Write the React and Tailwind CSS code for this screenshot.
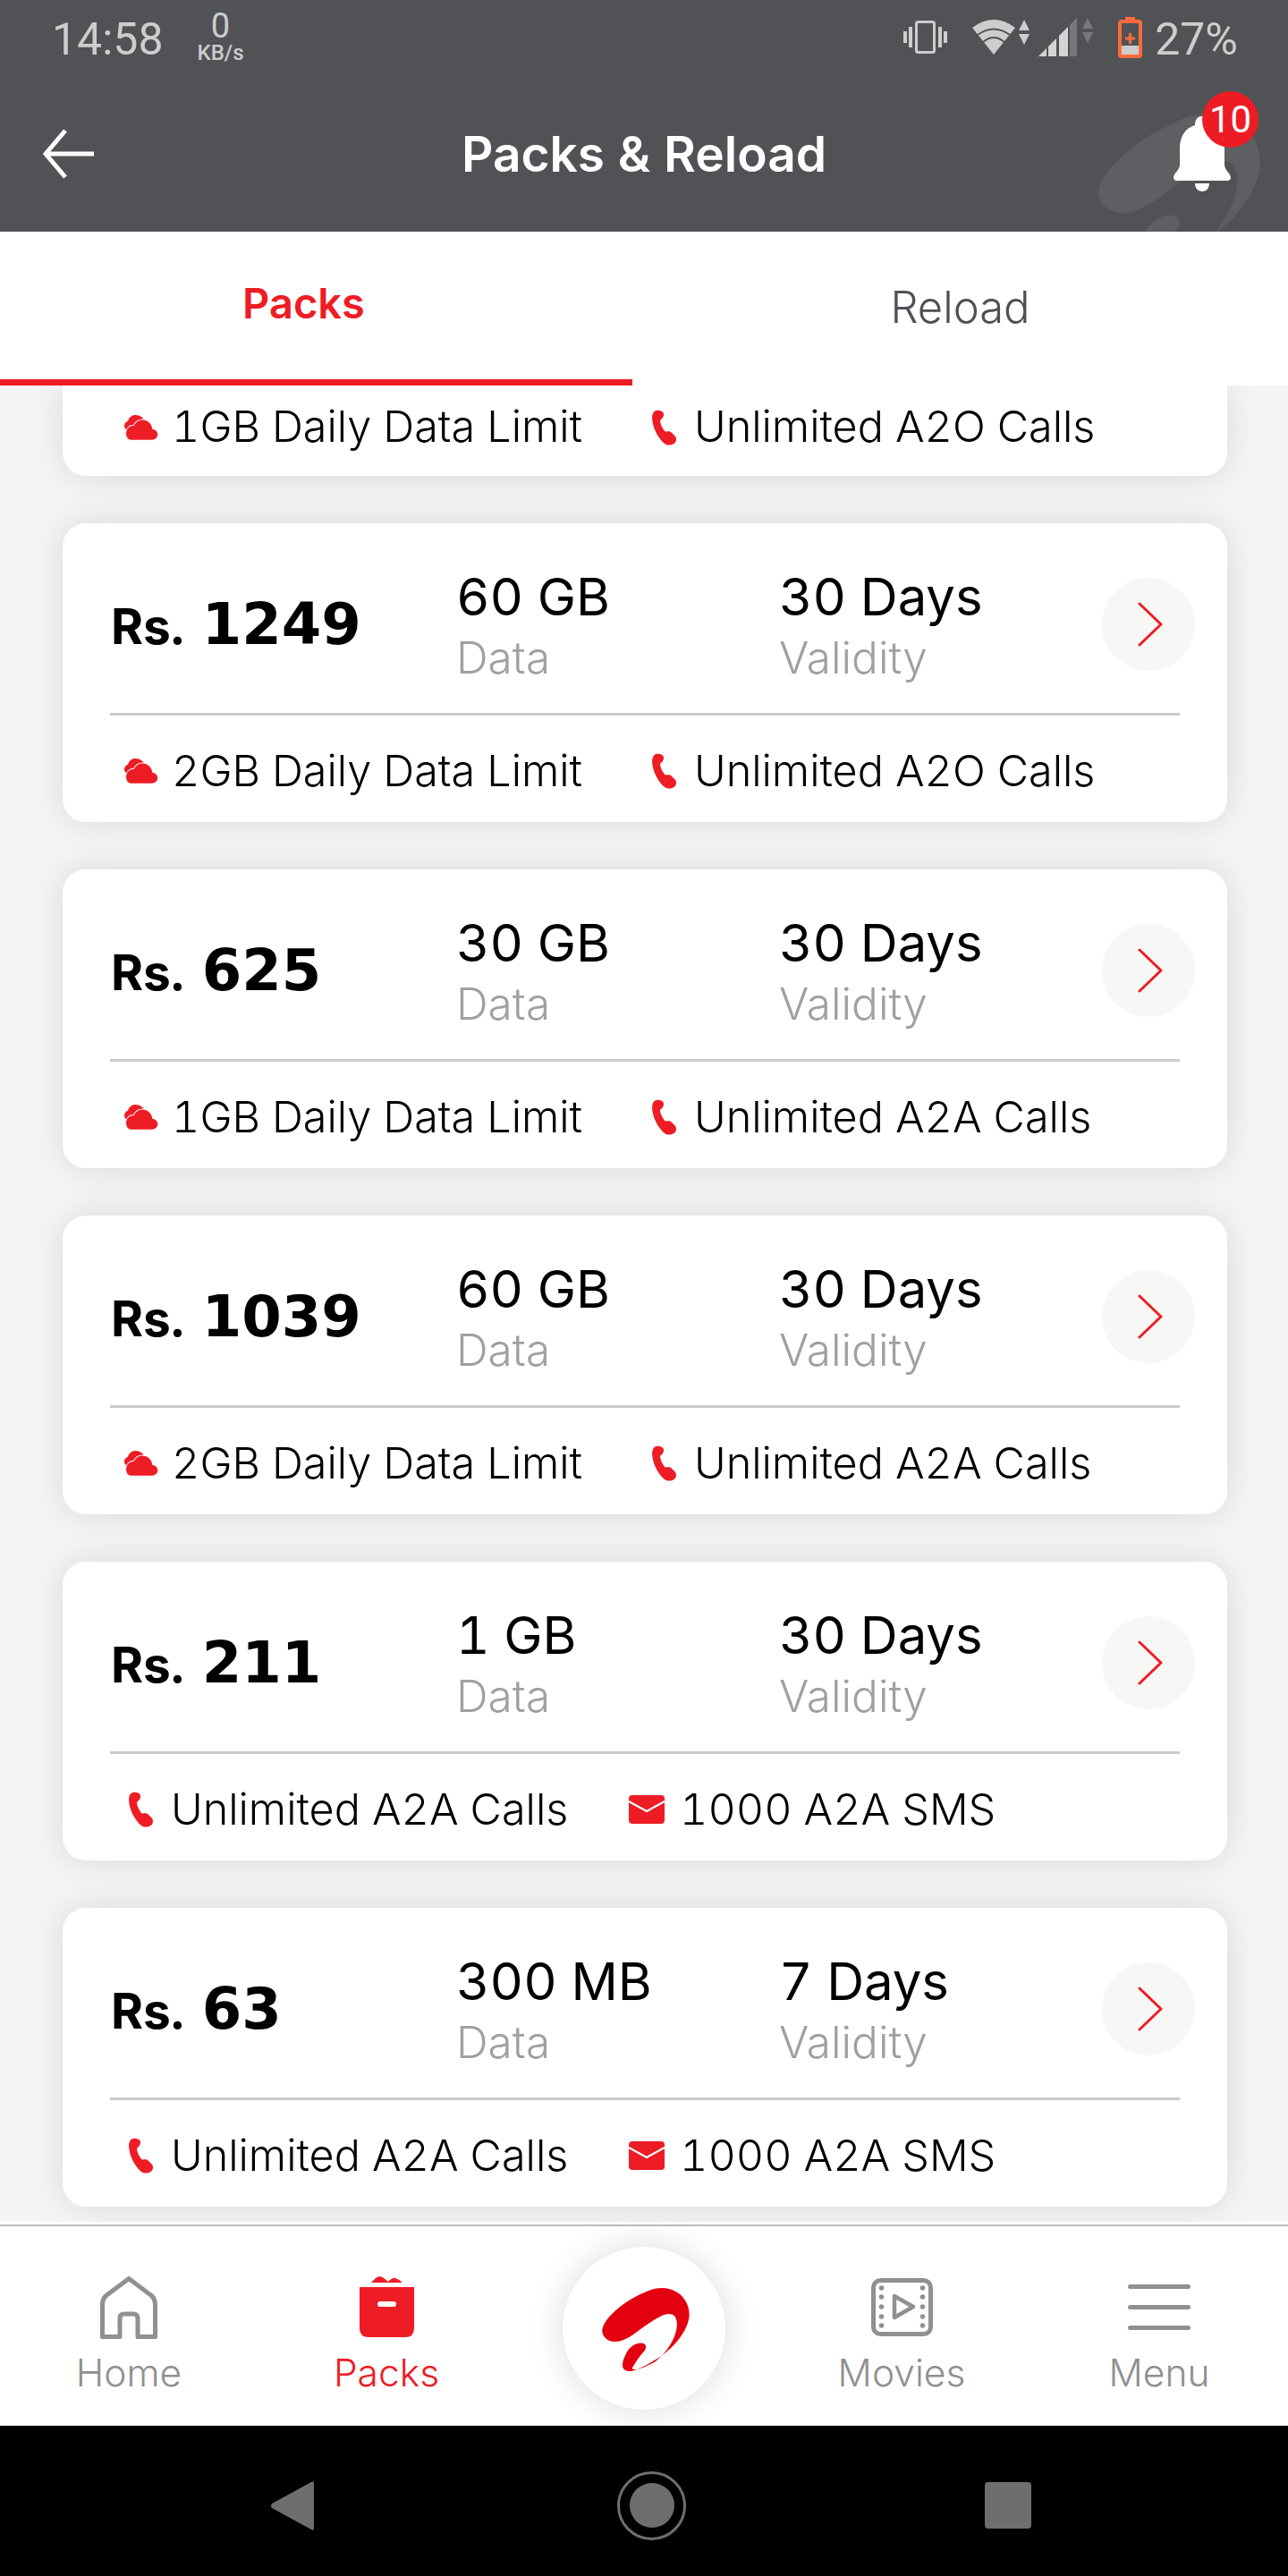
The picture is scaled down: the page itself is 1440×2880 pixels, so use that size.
import React from "react";

const RED = "#ee1c25";

const LOGO =
  "M70 215 C75 180 130 130 190 100 C220 85 245 75 270 75 C340 78 362 130 362 165 C360 220 300 290 240 320 C200 345 165 360 150 352 C130 345 138 320 150 295 C165 265 195 255 210 262 C222 270 215 285 205 293 C190 310 175 335 170 345 C180 355 215 340 250 320 C290 290 325 230 320 190 C318 160 295 155 265 170 C225 190 185 225 160 240 C130 258 95 262 78 240 C70 230 70 222 70 215 Z";

const packs = [
  { price: "1249", data: "60 GB", days: "30 Days", perks: [["cloud", "2GB Daily Data Limit"], ["phone", "Unlimited A2O Calls"]] },
  { price: "625", data: "30 GB", days: "30 Days", perks: [["cloud", "1GB Daily Data Limit"], ["phone", "Unlimited A2A Calls"]] },
  { price: "1039", data: "60 GB", days: "30 Days", perks: [["cloud", "2GB Daily Data Limit"], ["phone", "Unlimited A2A Calls"]] },
  { price: "211", data: "1 GB", days: "30 Days", perks: [["phone", "Unlimited A2A Calls"], ["mail", "1000 A2A SMS"]] },
  { price: "63", data: "300 MB", days: "7 Days", perks: [["phone", "Unlimited A2A Calls"], ["mail", "1000 A2A SMS"]] },
];

function CloudIcon() {
  return (
    <svg width="40" height="30" viewBox="0 0 120 92" className="shrink-0">
      <path d="M4 48 C-1 40 3 28 14 24 C18 10 30 0 44 4 C54 4 62 10 68 16 L30 40 L12 58 Z" fill={RED} />
      <path
        d="M24 88 H96 C108 88 116 80 116 70 C116 60 108 52 98 52 C96 34 82 20 64 20 C50 20 40 28 35 40 C20 38 8 50 8 66 C8 78 14 88 24 88 Z"
        fill={RED}
        stroke="#fff"
        strokeWidth="6"
        paintOrder="stroke"
      />
    </svg>
  );
}

function PhoneIcon() {
  return (
    <svg width="29" height="40" viewBox="0 0 86 122" className="shrink-0">
      <path
        d="M8 8 C14 0 32 0 40 10 C44 18 40 28 30 35 C28 42 34 60 46 74 C50 76 58 72 66 76 L80 90 C86 96 86 110 76 116 C64 124 48 122 36 108 C18 88 4 60 2 30 C2 20 4 14 8 8 Z"
        fill={RED}
      />
    </svg>
  );
}

function MailIcon() {
  return (
    <svg width="40" height="32" viewBox="0 0 40 32" className="shrink-0">
      <rect width="40" height="32" rx="4" fill={RED} />
      <path d="M0 7 L20 18 L40 7" fill="none" stroke="#fff" strokeWidth="2.2" />
    </svg>
  );
}

function Perk({ kind, text }) {
  return (
    <div className="flex items-center">
      {kind === "cloud" && (
        <span className="flex w-[54px]">
          <CloudIcon />
        </span>
      )}
      {kind === "phone" && (
        <span className="flex w-[48px]">
          <PhoneIcon />
        </span>
      )}
      {kind === "mail" && (
        <span className="flex w-[57px]">
          <MailIcon />
        </span>
      )}
      <span className="text-[48.5px] leading-none font-light text-black">{text}</span>
    </div>
  );
}

function PerkRow({ perks, className }) {
  const first = perks[0][0];
  return (
    <div className={`flex items-center ${className}`}>
      <div className={first === "cloud" ? "w-[590px]" : "w-[560px]"}>
        <Perk kind={perks[0][0]} text={perks[0][1]} />
      </div>
      <Perk kind={perks[1][0]} text={perks[1][1]} />
    </div>
  );
}

function PackCard({ pack }) {
  const isCloud = pack.perks[0][0] === "cloud";
  return (
    <div className="h-[334px] shrink-0 rounded-[26px] bg-white shadow-[0_0_40px_rgba(0,0,0,0.12)] flex flex-col">
      <div className="h-[212px] flex items-center pl-[54px] pr-[36px] pt-[14px]">
        <div className="w-[386px] flex items-baseline">
          <span className="text-[55px] font-bold text-black leading-none">Rs.</span>
          <span className="ml-[20px] text-[64px] font-bold leading-none text-black [font-family:'DejaVu_Sans',sans-serif]">
            {pack.price}
          </span>
        </div>
        <div className="w-[361px] flex flex-col mt-[5px]">
          <span className="text-[58px] leading-[68px] text-black">{pack.data}</span>
          <span className="text-[49.5px] leading-[68px] font-light text-[#a0a0a0]">Data</span>
        </div>
        <div className="flex-1 flex flex-col mt-[5px]">
          <span className="text-[58px] leading-[68px] text-black">{pack.days}</span>
          <span className="text-[49.5px] leading-[68px] font-light text-[#a0a0a0]">Validity</span>
        </div>
        <div className="w-[104px] h-[104px] rounded-full bg-[#f7f7f5] flex items-center justify-center">
          <svg width="28" height="50" viewBox="0 0 28 50" className="ml-[3px]">
            <path d="M2 2 L26 25 L2 48" fill="none" stroke={RED} strokeWidth="3" strokeLinecap="round" strokeLinejoin="round" />
          </svg>
        </div>
      </div>
      <div className="mx-[53px] h-[3px] bg-[#cbcbcb]" />
      <PerkRow perks={pack.perks} className={`flex-1 pt-[5px] ${isCloud ? "pl-[68px]" : "pl-[73px]"}`} />
    </div>
  );
}

function StatusBar() {
  return (
    <div className="h-[85px] flex items-start pl-[58px] pr-[56px] text-[#cdcdcd] [font-family:Roboto,sans-serif]">
      <span className="text-[50px] leading-none mt-[19px]">14:58</span>
      <div className="ml-[38px] mt-[10px] flex flex-col items-center">
        <span className="text-[38px] leading-[38px]">0</span>
        <span className="text-[24px] leading-[22px] font-medium">KB/s</span>
      </div>
      <div className="ml-auto flex items-start mt-[19px]">
        <svg width="49" height="37" viewBox="0 0 49 37" className="mt-[4px]" fill="#cdcdcd">
          <rect x="14.5" y="1.5" width="20" height="34" rx="2" fill="none" stroke="#cdcdcd" strokeWidth="3" />
          <rect x="0" y="12" width="4" height="13" />
          <rect x="6" y="7" width="4" height="23" />
          <rect x="39" y="7" width="4" height="23" />
          <rect x="45" y="12" width="4" height="13" />
        </svg>
        <svg width="64" height="42" viewBox="0 0 64 42" className="ml-[28px] mt-[2px]">
          <path d="M0 10 Q24 -8 48 10 L24 40 Z" fill="#cdcdcd" />
          <path d="M6 18 Q24 5 42 18 M12 26 Q24 16 36 26" fill="none" stroke="#515256" strokeWidth="1.8" />
          <path d="M58 1 L64 13 H52 Z M52 17 H64 L58 29 Z" fill="#cdcdcd" />
        </svg>
        <svg width="61" height="44" viewBox="0 0 61 44" className="ml-[10px]">
          <polygon points="0,44 9,44 9,35" fill="#d4d4d4" />
          <polygon points="11,44 20,44 20,24 11,33" fill="#d4d4d4" />
          <polygon points="23,44 33,44 33,11 23,21" fill="#d4d4d4" />
          <polygon points="35,44 43,44 43,1 35,9" fill="#77787b" />
          <path d="M55 1 L61 13 H49 Z M49 17 H61 L55 29 Z" fill="#77787b" />
        </svg>
        <svg width="27" height="46" viewBox="0 0 27 46" className="ml-[28px]">
          <rect x="8" y="0" width="11" height="6" fill="#ff6b3d" />
          <rect x="2" y="5" width="23" height="39" rx="2" fill="none" stroke="#ff6b3d" strokeWidth="4" />
          <rect x="4" y="32" width="19" height="10" fill="#cdcdcd" />
          <path d="M13.5 18 V30 M8 24 H19" stroke="#ff6b3d" strokeWidth="3" />
        </svg>
        <span className="ml-[14px] text-[50px] leading-none">27%</span>
      </div>
    </div>
  );
}

function Header() {
  return (
    <div className="relative h-[259px] shrink-0 overflow-hidden bg-[#515256] flex flex-col">
      {/* watermark logo behind the bell */}
      <svg width="260" height="260" viewBox="0 0 420 420" className="absolute left-[1185px] top-[80px]">
        <path d={LOGO} fill="#5e5f63" />
      </svg>
      <div className="relative">
        <StatusBar />
      </div>
      <div className="relative flex-1 flex items-center justify-center">
        <svg width="58" height="58" viewBox="0 0 58 58" className="absolute left-[48px] top-[58px]">
          <path d="M25 3 L3 29 L25 55 M3 29 H57" fill="none" stroke="#fff" strokeWidth="5" />
        </svg>
        <span className="text-[55px] font-semibold text-white leading-none">Packs &amp; Reload</span>
        <div className="absolute left-[1312px] top-[45px]">
          <svg width="64" height="84" viewBox="0 0 64 84">
            <path
              d="M32 0 C26 0 24 5 24 10 C13 13 7 23 7 36 V54 C7 60 1 63 0 68 Q0 72 4 72 H60 Q64 72 64 68 C63 63 57 60 57 54 V36 C57 23 51 13 40 10 C40 5 38 0 32 0 Z"
              fill="#fff"
            />
            <path d="M24 75 H40 C40 80 37 84 32 84 C27 84 24 80 24 75 Z" fill="#fff" />
          </svg>
          <span className="absolute left-[32px] top-[-28px] w-[63px] h-[63px] rounded-full bg-[#ed1c24] text-white text-[42px] leading-[63px] text-center [font-family:Roboto,sans-serif]">
            10
          </span>
        </div>
      </div>
    </div>
  );
}

function Tabs() {
  return (
    <div className="h-[172px] shrink-0 bg-white flex relative z-10">
      <div className="w-[707px] border-b-[7px] border-[#ee1c25] flex items-center justify-center pr-[28px] pb-[6px]">
        <span className="text-[47px] font-semibold text-[#ee1c25] leading-none">Packs</span>
      </div>
      <div className="flex-1 flex items-center justify-center pb-[4px]">
        <span className="text-[49px] font-light text-[#4f5054] leading-none">Reload</span>
      </div>
    </div>
  );
}

function NavItem({ label, tone, children }) {
  return (
    <div className="flex flex-col items-center pt-[56px]">
      <div className="h-[70px] flex items-start">{children}</div>
      <span className={`mt-[13px] text-[42.5px] leading-[50px] font-light ${tone}`}>{label}</span>
    </div>
  );
}

function BottomNav() {
  return (
    <div className="relative z-10 h-[228px] shrink-0 bg-white pt-[3px]">
      <div className="h-full border-t-[2px] border-[#bcbcbc] grid grid-cols-5">
        <NavItem label="Home" tone="text-[#909090]">
          <svg width="64" height="70" viewBox="0 0 64 70">
            <path
              d="M2.5 67.5 V31 Q2.5 26 6 22 L32 2.5 L58 22 Q61.5 26 61.5 31 V67.5 H42 V47 Q42 42 37 42 H27 Q22 42 22 47 V67.5 Z"
              fill="none"
              stroke="#909090"
              strokeWidth="5"
              strokeLinejoin="round"
            />
          </svg>
        </NavItem>
        <NavItem label="Packs" tone="text-[#ee1c25]">
          <svg width="61" height="68" viewBox="0 0 61 68">
            <path d="M13 7 Q18 1 22 0 Q26 0 32 6 Q37 1 40 2 Q44 3 48 7 Z" fill={RED} />
            <path d="M0 12 H61 V58 Q61 68 51 68 H10 Q0 68 0 58 Z" fill={RED} />
            <rect x="20" y="28" width="21" height="6" rx="3" fill="#fff" />
          </svg>
        </NavItem>
        <div className="flex items-center justify-center pt-[5px]">
          <div className="w-[182px] h-[182px] rounded-full bg-white shadow-[0_0_40px_rgba(0,0,0,0.14)] flex items-center justify-center">
            <svg width="140" height="140" viewBox="0 0 420 420">
              <path d={LOGO} fill="#e3000f" />
            </svg>
          </div>
        </div>
        <NavItem label="Movies" tone="text-[#909090]">
          <svg width="69" height="66" viewBox="0 0 69 66" fill="#909090" className="mt-[2px]">
            <rect x="2.5" y="2.5" width="64" height="60" rx="8" fill="none" stroke="#909090" strokeWidth="5" />
            {[11, 21, 32, 43, 53].map((y) => (
              <React.Fragment key={y}>
                <circle cx="11.5" cy={y} r="2.8" />
                <circle cx="57.5" cy={y} r="2.8" />
              </React.Fragment>
            ))}
            <path d="M26 20 L47 32 L26 44 Z" fill="none" stroke="#909090" strokeWidth="4.5" strokeLinejoin="round" />
          </svg>
        </NavItem>
        <NavItem label="Menu" tone="text-[#909090]">
          <div className="w-[70px] flex flex-col gap-[18px] pt-[9px]">
            <div className="h-[5px] rounded-full bg-[#909090]" />
            <div className="h-[5px] rounded-full bg-[#909090]" />
            <div className="h-[5px] rounded-full bg-[#909090]" />
          </div>
        </NavItem>
      </div>
    </div>
  );
}

function SystemNav() {
  return (
    <div className="h-[168px] shrink-0 bg-black flex items-center pl-[302px]">
      <svg width="49" height="57" viewBox="0 0 49 57" className="mt-[10px]">
        <path d="M46 2 Q49 0 49 4 V53 Q49 57 46 55 L2 31 Q0 28.5 2 26 Z" fill="#6e6e6e" />
      </svg>
      <div className="ml-[339px] mt-[10px] w-[77px] h-[77px] rounded-full border-[3px] border-[#6e6e6e] flex items-center justify-center">
        <div className="w-[50px] h-[50px] rounded-full bg-[#6e6e6e]" />
      </div>
      <div className="ml-[334px] mt-[10px] w-[52px] h-[52px] rounded-[4px] bg-[#6e6e6e]" />
    </div>
  );
}

export default function App() {
  return (
    <div className="w-[1440px] h-[2880px] flex flex-col overflow-hidden bg-[#f5f5f5] tabular-nums [font-family:Inter,sans-serif]">
      <Header />
      <Tabs />
      <div className="flex-1 min-h-0 overflow-hidden pl-[70px] pr-[68px] flex flex-col gap-[53px]">
        {/* first card is scrolled under the tabs, only its bottom row shows */}
        <div className="h-[101px] shrink-0 rounded-b-[26px] bg-white shadow-[0_0_40px_rgba(0,0,0,0.12)] flex">
          <PerkRow
            perks={[
              ["cloud", "1GB Daily Data Limit"],
              ["phone", "Unlimited A2O Calls"],
            ]}
            className="flex-1 pb-[8px] pl-[68px]"
          />
        </div>
        {packs.map((pack) => (
          <PackCard key={pack.price} pack={pack} />
        ))}
      </div>
      <BottomNav />
      <SystemNav />
    </div>
  );
}
